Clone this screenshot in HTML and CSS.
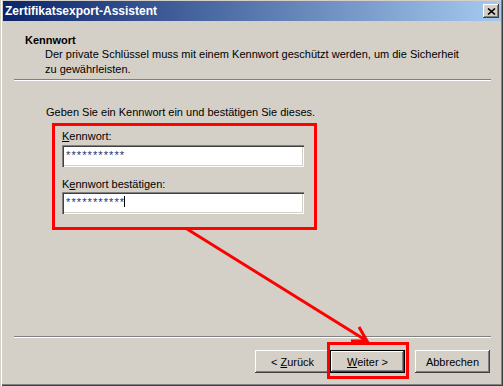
FILE: index.html
```html
<!DOCTYPE html>
<html lang="de">
<head>
  <meta charset="UTF-8">
  <meta name="viewport" content="width=device-width, initial-scale=1.0">
  <title>Zertifikatsexport-Assistent</title>
  <link rel="stylesheet" href="styles.css">
</head>
<body>

  <div class="window">

    <!-- Title bar -->
    <div class="titlebar">
      <span class="title">Zertifikatsexport-Assistent</span>
      <button class="close" aria-label="Schließen">
        <svg width="9" height="7" viewBox="0 0 9 7">
          <path d="M1 0.5 L8 6.5 M8 0.5 L1 6.5" stroke="#000" stroke-width="1.6" fill="none"/>
        </svg>
      </button>
    </div>

    <!-- Wizard header -->
    <div class="header">
      <h1>Kennwort</h1>
      <p>Der private Schlüssel muss mit einem Kennwort geschützt werden, um die Sicherheit<br>zu gewährleisten.</p>
    </div>
    <div class="separator"></div>

    <!-- Page content -->
    <div class="page">
      <p class="intro">Geben Sie ein Kennwort ein und bestätigen Sie dieses.</p>
      <div class="fields">
        <label><u>K</u>ennwort:</label>
        <div class="input">***********</div>
        <label class="second">K<u>e</u>nnwort bestätigen:</label>
        <div class="input">***********<span class="caret"></span></div>
      </div>
    </div>
    <div class="separator"></div>

    <!-- Buttons -->
    <div class="buttons">
      <button class="btn">&lt; <u>Z</u>urück</button>
      <span class="marker">
        <button class="btn default"><u>W</u>eiter &gt;</button>
      </span>
      <button class="btn cancel">Abbrechen</button>
    </div>

    <!-- Annotation arrow -->
    <svg class="arrow" width="503" height="386" viewBox="0 0 503 386">
      <path d="M187 229 L367 341 M359 327 L367 341 L351 341" stroke="#ff0000" stroke-width="3" fill="none"/>
    </svg>

  </div>

</body>
</html>
```

FILE: styles.css
```css
/* Basic Styling */
* {
  box-sizing: border-box;
  font-family: "Liberation Sans", Arial, sans-serif;
}
body {
  margin: 0;
  background-color: #d4d0c8;
  color: #000;
  font-size: 11px;
}

/* Window frame */
.window {
  position: relative;
  width: 503px;
  height: 386px;
  background-color: #d4d0c8;
  box-shadow: inset 1px 0 #d4d0c8, inset 2px 0 #fff,
              inset -1px -1px #404040, inset -2px -2px #808080;
  overflow: hidden;
}

/* Title bar */
.titlebar {
  display: flex;
  align-items: center;
  justify-content: space-between;
  height: 20px;
  margin: 1px 2px 0 3px;
  padding: 0 2px 0 2px;
  background: linear-gradient(to right, #0a246a, #a6caf0);
}
.title {
  color: #fff;
  font-weight: bold;
  font-size: 12px;
}
.close {
  display: flex;
  align-items: center;
  justify-content: center;
  width: 16px;
  height: 14px;
  padding: 0;
  border: none;
  background-color: #d4d0c8;
  box-shadow: inset -1px -1px #404040, inset 1px 1px #fff,
              inset -2px -2px #808080, inset 2px 2px #d4d0c8;
}

/* Header */
.header {
  padding: 12px 0 0 25px;
}
.header h1 {
  margin: 0;
  font-size: 11px;
  font-weight: bold;
  line-height: 14px;
}
.header p {
  margin: 0 0 0 20px;
  line-height: 15px;
}
.separator {
  height: 2px;
  margin: 2px 12px 0 14px;
  border-top: 1px solid #808080;
  border-bottom: 1px solid #fff;
}

/* Page */
.page {
  height: 255px;
  padding: 24px 0 0 46px;
}
.page + .separator {
  margin-top: 0;
}
.intro {
  margin: 0;
  line-height: 15px;
}
.fields {
  display: flex;
  flex-direction: column;
  width: 265px;
  margin: 3px 0 0 6px;
  padding: 3px 10px 13px 7px;
  border: 3px solid #ff0000;
}
.fields label {
  line-height: 15px;
  margin-bottom: 1px;
}
.fields label.second {
  margin-top: 10px;
  margin-bottom: 0;
}
.input {
  height: 22px;
  padding: 3px 2px 1px 4px;
  line-height: 15px;
  background-color: #fff;
  color: #1e3276;
  letter-spacing: 1.1px;
  box-shadow: inset 1px 1px #808080, inset 2px 2px #404040,
              inset -1px -1px #fff, inset -2px -2px #d4d0c8;
}
.caret {
  display: inline-block;
  width: 1px;
  height: 11px;
  margin-left: -1px;
  background-color: #000;
  vertical-align: -1px;
}

/* Buttons */
.buttons {
  display: flex;
  justify-content: flex-end;
  padding: 12px 13px 0 0;
}
.btn {
  width: 75px;
  height: 23px;
  padding: 0;
  border: none;
  background-color: #d4d0c8;
  color: #000;
  font-size: 11px;
  box-shadow: inset -1px -1px #404040, inset 1px 1px #fff,
              inset -2px -2px #808080, inset 2px 2px #d4d0c8;
}
.btn.default {
  border: 1px solid #000;
}
.btn.cancel {
  margin-left: 10px;
}
.marker {
  position: relative;
  display: flex;
}
.marker::after {
  content: "";
  position: absolute;
  left: -3px;
  right: -4px;
  top: -8px;
  bottom: -6px;
  border: 3px solid #ff0000;
}

/* Annotation */
.arrow {
  position: absolute;
  top: 0;
  left: 0;
  pointer-events: none;
}
```
